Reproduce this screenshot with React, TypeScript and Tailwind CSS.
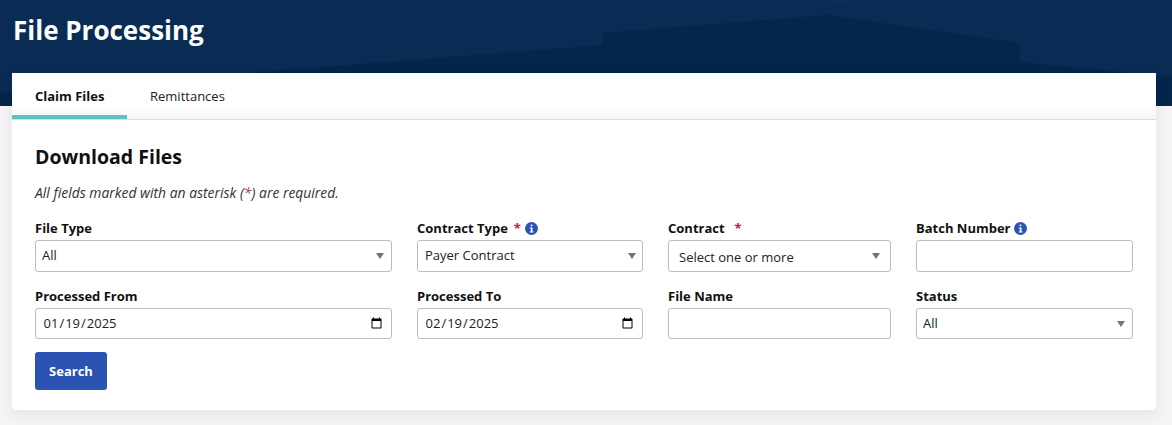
import React from 'react';

const InfoIcon = () => (
  <svg viewBox="0 0 13 13" className="w-[13px] h-[13px] shrink-0">
    <circle cx="6.5" cy="6.5" r="6.5" fill="#2b54b2" />
    <rect x="5.6" y="2.4" width="1.9" height="1.9" rx="0.9" fill="#fff" />
    <path d="M4.8 5.4h2.7v4h1v1.2H4.8V9.4h1V6.6h-1z" fill="#fff" />
  </svg>
);

const Field: React.FC<{ label: string; extra?: React.ReactNode; children: React.ReactNode }> = ({ label, extra, children }) => (
  <div className="flex flex-col">
    <div className="h-[17px] mb-[3px] flex items-center text-[13px] leading-[17px] font-bold text-[#111]">
      <span>{label}</span>
      {extra}
    </div>
    {children}
  </div>
);

const SelectBox: React.FC<{ value: string; h: string; px?: string; text?: string; arrow?: string }> = ({
  value,
  h,
  px = 'pl-[6px]',
  text = '',
  arrow = 'right-[8px]',
}) => (
  <div className="relative">
    <select
      defaultValue={value}
      className={`block w-full appearance-none bg-white border border-[#bdbdbd] rounded-[3px] text-[13px] text-[#222] outline-none ${h} ${px} ${text}`}
    >
      <option>{value}</option>
    </select>
    <span className={`absolute top-1/2 -translate-y-1/2 w-0 h-0 border-x-[4px] border-x-transparent border-t-[6px] border-t-[#757575] pointer-events-none ${arrow}`} />
  </div>
);

const inputCls = 'block w-full bg-white border border-[#bdbdbd] rounded-[3px] text-[13px] text-[#222] outline-none';

export default function App() {
  return (
    <div className="relative w-[1172px] h-[425px] overflow-hidden bg-[#f4f4f6] font-['Open_Sans',sans-serif]">
      <header className="relative h-[106px] bg-[#0a2c54] overflow-hidden">
        <svg viewBox="0 0 1172 106" className="absolute inset-0 w-full h-full">
          <polygon points="830,3 870,0 830,0" fill="#0c2f5a" />
          <polygon points="0,92 603,45 603,33 828,15 1020,43 1020,62 1172,77 1172,106 0,106" fill="#03264a" />
        </svg>
        <h1 className="relative pl-[13px] pt-[13px] text-[26px] leading-[34px] font-bold text-white">File Processing</h1>
      </header>

      <main className="absolute left-[12px] top-[73px] w-[1144px] h-[337px] bg-white rounded-b-[4px] shadow-[0_4px_14px_rgba(30,40,70,0.08)]">
        <nav className="h-[47px] flex border-b border-[#dcdde0] bg-gradient-to-b from-white from-70% to-[#f5f5f8]">
          <div className="w-[115px] h-[46px] border-b-4 border-[#5cc4bb] pl-[23px] pt-[14px] text-[13px] leading-[18px] font-bold text-[#111]">
            Claim Files
          </div>
          <div className="pl-[23px] pt-[14px] text-[13px] leading-[18px] text-[#222]">Remittances</div>
        </nav>

        <section className="pt-[24px] px-[23px]">
          <h2 className="text-[19.5px] leading-[26px] font-bold text-[#111]">Download Files</h2>
          <p className="mt-[14px] mb-[18px] text-[13.9px] leading-[18px] italic text-[#333]">
            All fields marked with an asterisk (<span className="text-[#b0305a]">*</span>) are required.
          </p>

          <div className="grid grid-cols-[357px_226px_223px_217px] gap-x-[25px] gap-y-[16px]">
            <Field label="File Type">
              <SelectBox value="All" h="h-[32px]" />
            </Field>
            <Field
              label="Contract Type"
              extra={
                <>
                  <span className="ml-[6px] mr-[4px] text-[#d1123f]">*</span>
                  <InfoIcon />
                </>
              }
            >
              <SelectBox value="Payer Contract" h="h-[32px]" px="pl-[7px]" arrow="right-[7px]" />
            </Field>
            <Field label="Contract" extra={<span className="ml-[10px] text-[#d1123f]">*</span>}>
              <SelectBox value="Select one or more" h="h-[32px]" px="pl-[10px]" text="pt-[3px]" arrow="right-[11px]" />
            </Field>
            <Field
              label="Batch Number"
              extra={
                <span className="ml-[3px]">
                  <InfoIcon />
                </span>
              }
            >
              <input type="text" className={`${inputCls} h-[32px]`} />
            </Field>

            <Field label="Processed From">
              <input type="date" defaultValue="2025-01-19" className={`${inputCls} h-[31px] pl-[6.5px] pr-[6px]`} />
            </Field>
            <Field label="Processed To">
              <input type="date" defaultValue="2025-02-19" className={`${inputCls} h-[31px] pl-[6.5px] pr-[6px]`} />
            </Field>
            <Field label="File Name">
              <input type="text" className={`${inputCls} h-[31px]`} />
            </Field>
            <Field label="Status">
              <SelectBox value="All" h="h-[31px]" />
            </Field>
          </div>

          <button className="mt-[13px] block w-[72px] h-[38px] pt-[1px] bg-[#2b54b2] rounded-[3px] text-[13px] font-bold text-white">
            Search
          </button>
        </section>
      </main>
    </div>
  );
}
